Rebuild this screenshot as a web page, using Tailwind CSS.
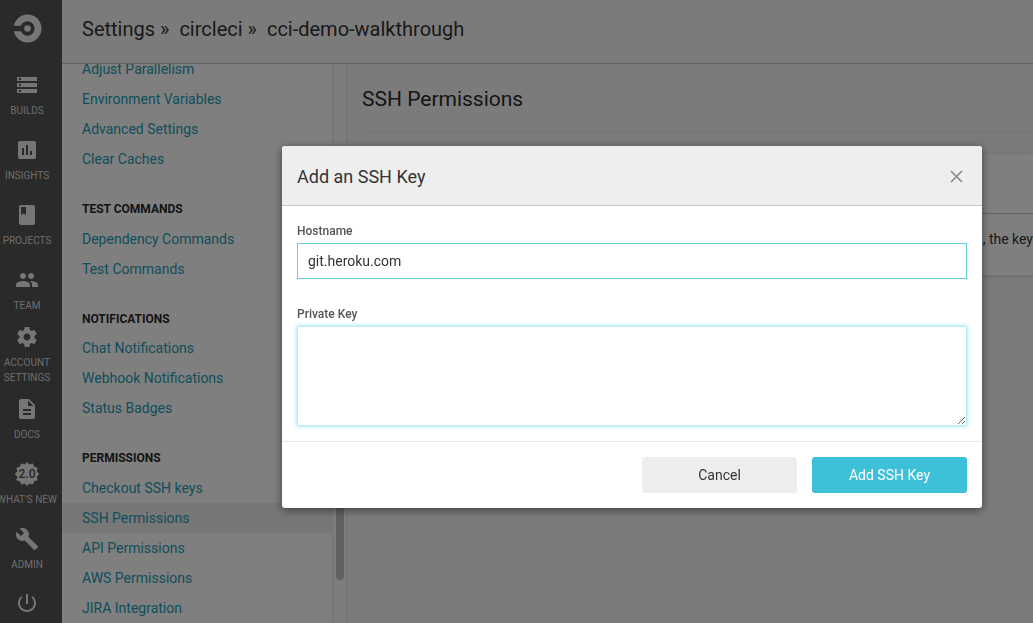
<!DOCTYPE html>
<html lang="en">
<head>
<meta charset="utf-8">
<meta name="viewport" content="width=device-width, initial-scale=1">
<title>SSH Permissions - cci-demo-walkthrough</title>
<script src="https://cdn.jsdelivr.net/npm/@tailwindcss/browser@4"></script>
</head>
<body class="h-screen overflow-hidden bg-[#f7f7f7] font-['Roboto',sans-serif] text-sm text-[#343434]">
<div class="flex h-full">
  <nav aria-label="Main" class="flex w-[62px] shrink-0 flex-col overflow-hidden bg-[#555] pr-2 text-center text-[10px] leading-[15px] text-[#dadada]">
    <a href="#" aria-label="CircleCI" class="flex h-[63px] shrink-0 items-start justify-center pt-[14px]">
      <svg class="size-[29px]" viewBox="0 0 29 29" fill="#ececec"><path d="M.8 11.800A14 14 0 1 1 .8 17.200H7.800A7.200 7.200 0 1 0 7.800 11.800Z"/><circle cx="14.500" cy="14.500" r="3.300"/></svg>
    </a>
    <a href="#" class="flex h-[65px] shrink-0 flex-col items-center justify-center gap-[6px]">
      <svg class="size-6 shrink-0" viewBox="0 0 24 24" fill="#ececec"><path fill-rule="evenodd" d="M2 4h20v4H2zM4 5v2h2V5zM2 10h20v4H2zM4 11v2h2v-2zM2 16h20v4H2zM4 17v2h2v-2z"/></svg>
      <span>BUILDS</span>
    </a>
    <a href="#" class="flex h-[65px] shrink-0 flex-col items-center justify-center gap-[6px]">
      <svg class="size-6 shrink-0" viewBox="0 0 24 24" fill="#ececec"><path fill-rule="evenodd" d="M5 3H19A2 2 0 0 1 21 5V19A2 2 0 0 1 19 21H5A2 2 0 0 1 3 19V5A2 2 0 0 1 5 3ZM7 10V17H9V10ZM11 7V17H13V7ZM15 13V17H17V13Z"/></svg>
      <span>INSIGHTS</span>
    </a>
    <a href="#" class="flex h-[65px] shrink-0 flex-col items-center justify-center gap-[6px]">
      <svg class="size-6 shrink-0" viewBox="0 0 24 24" fill="#ececec"><path d="M18 2H6c-1.100 0-2 .9-2 2v16c0 1.100.9 2 2 2h12c1.100 0 2-.9 2-2V4c0-1.100-.9-2-2-2zM6 4h5v8l-2.500-1.500L6 12V4z"/></svg>
      <span>PROJECTS</span>
    </a>
    <a href="#" class="flex h-[65px] shrink-0 flex-col items-center justify-center gap-[6px]">
      <svg class="size-6 shrink-0" viewBox="0 0 24 24" fill="#ececec"><path d="M16 11c1.660 0 2.990-1.340 2.990-3S17.660 5 16 5c-1.660 0-3 1.340-3 3s1.340 3 3 3zm-8 0c1.660 0 2.990-1.340 2.990-3S9.660 5 8 5C6.340 5 5 6.340 5 8s1.340 3 3 3zm0 2c-2.330 0-7 1.170-7 3.500V19h14v-2.500c0-2.330-4.670-3.500-7-3.500zm8 0c-.29 0-.62.020-.97.050 1.160.84 1.970 1.970 1.970 3.450V19h6v-2.500c0-2.330-4.670-3.500-7-3.500z"/></svg>
      <span>TEAM</span>
    </a>
    <a href="#" class="flex h-[65px] shrink-0 flex-col items-center justify-center gap-[6px] pb-[2px]">
      <svg class="size-6 shrink-0" viewBox="0 0 24 24" fill="#ececec"><path d="M19.430 12.980c.04-.32.07-.64.07-.98s-.03-.66-.07-.98l2.110-1.650c.19-.15.24-.42.12-.64l-2-3.460c-.12-.22-.39-.3-.61-.22l-2.490 1c-.52-.4-1.080-.73-1.690-.98l-.38-2.650C14.460 2.180 14.250 2 14 2h-4c-.25 0-.46.18-.49.42l-.38 2.650c-.61.25-1.170.59-1.690.98l-2.490-1c-.23-.09-.49 0-.61.22l-2 3.460c-.13.22-.07.49.12.64l2.110 1.650c-.04.32-.07.65-.07.98s.03.66.07.98l-2.110 1.650c-.19.15-.24.42-.12.64l2 3.460c.12.22.39.3.61.22l2.490-1c.52.4 1.080.73 1.690.98l.38 2.650c.03.24.24.42.49.42h4c.25 0 .46-.18.49-.42l.38-2.650c.61-.25 1.170-.59 1.690-.98l2.490 1c.23.09.49 0 .61-.22l2-3.460c.12-.22.07-.49-.12-.64l-2.110-1.650zM12 15.500c-1.930 0-3.500-1.570-3.500-3.500s1.570-3.500 3.500-3.500 3.500 1.570 3.500 3.500-1.570 3.500-3.500 3.500z"/></svg>
      <span>ACCOUNT<br>SETTINGS</span>
    </a>
    <a href="#" class="flex h-[65px] shrink-0 flex-col items-center justify-center gap-[6px] pb-[2px]">
      <svg class="size-6 shrink-0" viewBox="0 0 24 24" fill="#ececec"><path d="M14 2H6c-1.100 0-1.990.9-1.990 2L4 20c0 1.100.89 2 1.990 2H18c1.100 0 2-.9 2-2V8l-6-6zm2 16H8v-2h8v2zm0-4H8v-2h8v2zm-3-5V3.500L18.500 9H13z"/></svg>
      <span>DOCS</span>
    </a>
    <a href="#" class="flex h-[65px] shrink-0 flex-col items-center justify-center gap-[6px] pb-[2px]">
      <svg class="size-6 shrink-0 overflow-visible" viewBox="0 0 24 24"><path fill="#ececec" stroke="#ececec" stroke-linejoin="round" d="M12 .5l2.400 2.500 3.300-1.100 1 3.300 3.400.8-.9 3.300 2.400 2.700-2.400 2.700.9 3.300-3.400.8-1 3.300-3.300-1.100L12 23.500l-2.400-2.500-3.300 1.100-1-3.300-3.400-.8.9-3.300L.4 12l2.400-2.700-.9-3.300 3.400-.8 1-3.300 3.300 1.100z"/><text x="12" y="16" text-anchor="middle" font-family="Roboto, sans-serif" font-size="12" font-weight="500" fill="#4a4a4a">2.0</text></svg>
      <span class="whitespace-nowrap">WHAT'S NEW</span>
    </a>
    <a href="#" class="flex h-[65px] shrink-0 flex-col items-center justify-center gap-[6px] pb-[2px]">
      <svg class="size-6 shrink-0" viewBox="0 0 24 24" fill="#ececec"><path d="M22.700 19l-9.100-9.100c.9-2.300.4-5-1.500-6.900-2-2-5-2.400-7.400-1.300L9 6 6 9 1.600 4.700C.4 7.100.9 10.100 2.900 12.100c1.900 1.900 4.600 2.400 6.900 1.500l9.100 9.100c.4.4 1 .4 1.400 0l2.300-2.300c.5-.4.5-1.100.1-1.400z"/></svg>
      <span>ADMIN</span>
    </a>
    <a href="#" aria-label="Log out" class="flex shrink-0 justify-center pt-2">
      <svg class="size-6" viewBox="0 0 24 24" fill="#ececec"><path d="M13 3h-2v10h2V3zm4.830 2.170l-1.420 1.420C17.990 7.860 19 9.810 19 12c0 3.870-3.130 7-7 7s-7-3.130-7-7c0-2.190 1.010-4.140 2.580-5.420L6.170 5.170C4.230 6.820 3 9.260 3 12c0 4.970 4.030 9 9 9s9-4.030 9-9c0-2.740-1.230-5.180-3.170-6.830z"/></svg>
    </a>
  </nav>

  <div class="flex min-w-0 flex-1 flex-col">
    <header class="flex h-16 shrink-0 items-center border-b border-[#c8c8c8] px-5 pb-[5px]">
      <ol class="flex gap-[10px] text-xl">
        <li><a href="#">Settings »</a></li>
        <li><a href="#">circleci »</a></li>
        <li><a href="#">cci-demo-walkthrough</a></li>
      </ol>
    </header>

    <div class="flex min-h-0 flex-1">
      <aside class="w-[271px] shrink-0 overflow-hidden border-r border-[#e4e4e4] bg-white leading-[30px] text-[#229db3]">
        <ul class="-mt-[10px]">
          <li><a href="#" class="block px-5">Adjust Parallelism</a></li>
          <li><a href="#" class="block px-5">Environment Variables</a></li>
          <li><a href="#" class="block px-5">Advanced Settings</a></li>
          <li><a href="#" class="block px-5">Clear Caches</a></li>
        </ul>
        <h2 class="px-5 pt-5 text-xs font-bold leading-[30px] text-[#2a2a2a]">TEST COMMANDS</h2>
        <ul>
          <li><a href="#" class="block px-5">Dependency Commands</a></li>
          <li><a href="#" class="block px-5">Test Commands</a></li>
        </ul>
        <h2 class="-mb-px px-5 pt-5 text-xs font-bold leading-[30px] text-[#2a2a2a]">NOTIFICATIONS</h2>
        <ul>
          <li><a href="#" class="block px-5">Chat Notifications</a></li>
          <li><a href="#" class="block px-5">Webhook Notifications</a></li>
          <li><a href="#" class="block px-5">Status Badges</a></li>
        </ul>
        <h2 class="px-5 pt-5 text-xs font-bold leading-[30px] text-[#2a2a2a]">PERMISSIONS</h2>
        <ul>
          <li><a href="#" class="block px-5">Checkout SSH keys</a></li>
          <li><a href="#" aria-current="page" class="block bg-[#eee] px-5">SSH Permissions</a></li>
          <li><a href="#" class="block px-5">API Permissions</a></li>
          <li><a href="#" class="block px-5">AWS Permissions</a></li>
          <li><a href="#" class="block px-5">JIRA Integration</a></li>
        </ul>
      </aside>
      <div class="flex w-[14px] shrink-0 items-end justify-center border-r border-[#ededed] bg-[#fafafa] pb-[43px]">
        <div class="h-[360px] w-2 rounded-full bg-[#c2c2c2]"></div>
      </div>
      <main class="min-w-0 flex-1 overflow-hidden pl-[15px]">
        <h1 class="flex h-[68px] items-center border-b border-[#e8e8e8] pt-[3px] text-[21px] text-[#2a2a2a]">SSH Permissions</h1>
        <section class="mt-[21px] h-[123px] border-y border-[#eaeaea] bg-white shadow-sm">
          <div class="h-[60px] border-b border-[#c8c8c8]"></div>
          <p class="flex h-[49px] items-center justify-end whitespace-nowrap text-sm text-[#343434]">, the key</p>
        </section>
      </main>
    </div>
  </div>
</div>

<div class="fixed inset-0 flex items-start bg-black/50 pl-[282px] pr-[51px] pt-[146px]">
  <form role="dialog" aria-labelledby="dialog-title" class="flex-1 rounded-[3px] bg-white shadow-[0_2px_10px_rgba(0,0,0,0.5)]">
    <div class="flex h-[60px] items-center justify-between rounded-t-[3px] border-b border-[#c8c8c8] bg-[#eee] px-[15px] pt-[2px]">
      <h2 id="dialog-title" class="text-lg">Add an SSH Key</h2>
      <button type="button" aria-label="Close" class="p-1"><svg class="size-[13px]" viewBox="0 0 13 13" fill="none" stroke="#888" stroke-width="1.600"><path d="M1 1l11 11M12 1L1 12"/></svg></button>
    </div>
    <div class="flex flex-col px-[15px] pb-[15px] pt-4">
      <label for="hostname" class="pb-[3px] text-xs font-medium leading-[18px] text-[#555]">Hostname</label>
      <input id="hostname" type="text" value="git.heroku.com" class="h-9 border border-[#5ed1df] px-[10px] text-sm outline-none">
      <label for="private-key" class="mt-[26px] pb-[3px] text-xs font-medium leading-[18px] text-[#555]">Private Key</label>
      <textarea id="private-key" class="h-[100px] resize border border-[#b9edf5] outline-none shadow-[0_0_4px_#7fe0ee]"></textarea>
    </div>
    <div class="flex justify-end gap-[15px] border-t border-[#eaeaea] p-[15px]">
      <button type="button" class="h-9 w-[155px] rounded-[3px] bg-[#eee]">Cancel</button>
      <button type="submit" class="h-9 w-[155px] rounded-[3px] bg-[#3fc0d9] text-white">Add SSH Key</button>
    </div>
  </form>
</div>
</body>
</html>
